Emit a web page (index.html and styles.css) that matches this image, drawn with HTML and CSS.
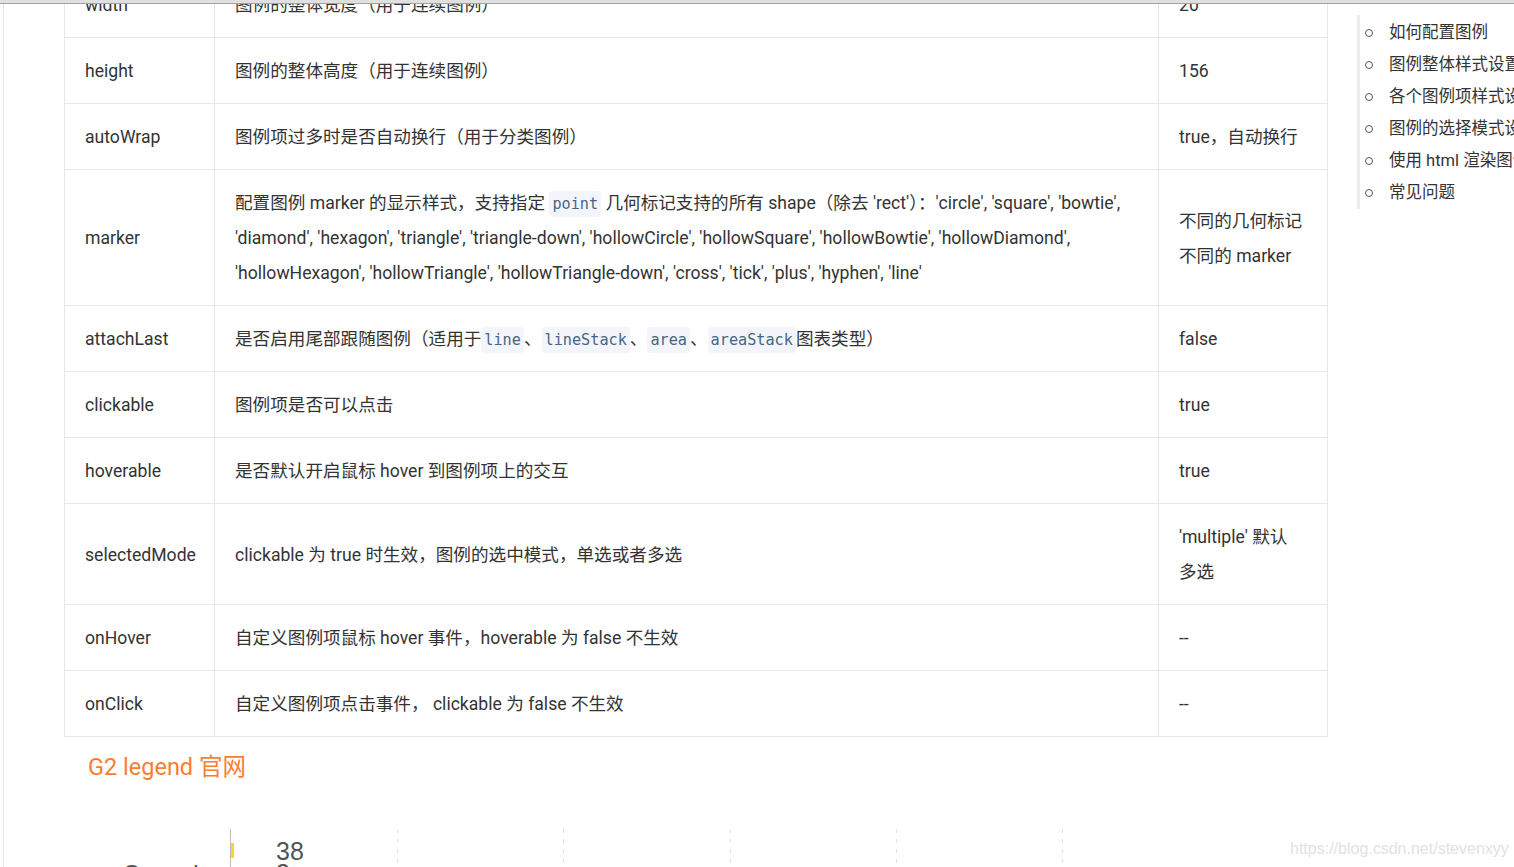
FILE: index.html
```html
<!DOCTYPE html>
<html lang="zh-CN">
<head>
<meta charset="utf-8">
<title>G2 legend</title>
<link rel="stylesheet" href="styles.css">
</head>
<body>
<div class="topbar"></div>
<div class="page">
  <main class="main">
    <table class="props">
      <colgroup><col class="c1"><col class="c2"><col class="c3"></colgroup>
      <tbody>
        <tr><td>width</td><td>图例的整体宽度（用于连续图例）</td><td>20</td></tr>
        <tr><td>height</td><td>图例的整体高度（用于连续图例）</td><td>156</td></tr>
        <tr><td>autoWrap</td><td>图例项过多时是否自动换行（用于分类图例）</td><td>true，自动换行</td></tr>
        <tr><td>marker</td><td>配置图例 marker 的显示样式，支持指定 <code>point</code> 几何标记支持的所有 shape（除去 'rect'）：'circle', 'square', 'bowtie', 'diamond', 'hexagon', 'triangle', 'triangle-down', 'hollowCircle', 'hollowSquare', 'hollowBowtie', 'hollowDiamond', 'hollowHexagon', 'hollowTriangle', 'hollowTriangle-down', 'cross', 'tick', 'plus', 'hyphen', 'line'</td><td>不同的几何标记不同的 marker</td></tr>
        <tr><td>attachLast</td><td>是否启用尾部跟随图例（适用于<code>line</code>、<code>lineStack</code>、<code>area</code>、<code>areaStack</code>图表类型）</td><td>false</td></tr>
        <tr><td>clickable</td><td>图例项是否可以点击</td><td>true</td></tr>
        <tr><td>hoverable</td><td>是否默认开启鼠标 hover 到图例项上的交互</td><td>true</td></tr>
        <tr><td>selectedMode</td><td>clickable 为 true 时生效，图例的选中模式，单选或者多选</td><td>'multiple' 默认<span class="nw">多选</span></td></tr>
        <tr><td>onHover</td><td>自定义图例项鼠标 hover 事件，hoverable 为 false 不生效</td><td>--</td></tr>
        <tr><td>onClick</td><td>自定义图例项点击事件，&nbsp;clickable 为 false 不生效</td><td>--</td></tr>
      </tbody>
    </table>
    <p class="linkline"><a class="extlink" href="#">G2 legend 官网</a></p>
    <svg class="chart" width="1100" height="120" viewBox="0 0 1100 120">
      <g stroke="#e2e2e2" stroke-width="1" stroke-dasharray="4 6">
        <line x1="333.5" y1="8" x2="333.5" y2="120"/>
        <line x1="499.5" y1="8" x2="499.5" y2="120"/>
        <line x1="666.5" y1="8" x2="666.5" y2="120"/>
        <line x1="832.5" y1="8" x2="832.5" y2="120"/>
        <line x1="998.5" y1="8" x2="998.5" y2="120"/>
      </g>
      <line x1="166.5" y1="8" x2="166.5" y2="120" stroke="#bcbcbc" stroke-width="1"/>
      <rect x="167" y="22" width="3" height="15" fill="#fad337"/>
      <text x="212" y="39" class="val">38</text>
      <text x="148" y="61" class="lbl" text-anchor="end">Oceania</text>
      <text x="212" y="61" class="val">3</text>
    </svg>
  </main>
  <aside class="toc">
    <ul class="toc-list">
      <li class="toc-item">如何配置图例</li>
      <li class="toc-item">图例整体样式设置</li>
      <li class="toc-item">各个图例项样式设置</li>
      <li class="toc-item">图例的选择模式设置</li>
      <li class="toc-item">使用 html 渲染图例</li>
      <li class="toc-item">常见问题</li>
    </ul>
  </aside>
</div>
<div class="watermark">https://blog.csdn.net/stevenxyy</div>
</body>
</html>
```

FILE: styles.css
```css
html, body {
  margin: 0;
  padding: 0;
  background: #fff;
  overflow: hidden;
}
body {
  font-family: Roboto, "Noto Sans CJK SC", sans-serif;
  color: #333;
  font-size: 17.6px;
}
.topbar {
  position: fixed;
  top: 0;
  left: 0;
  right: 0;
  height: 3px;
  background: #e0e0e0;
  border-bottom: 1px solid #a3a3a3;
  z-index: 10;
}
.page {
  display: flex;
  align-items: flex-start;
  padding-left: 3px;
}
.main {
  border-left: 1px solid #e6e6e6;
  padding-left: 60px;
  width: 1263px;
  flex: none;
  min-height: 900px;
}
.props {
  margin-top: -29px;
  border-collapse: collapse;
  table-layout: fixed;
  width: 1263px;
}
.c1 { width: 150px; }
.c2 { width: 944px; }
.c3 { width: 169px; }
.props td {
  border: 1px solid #e8e8e8;
  padding: 16px 20px 14px;
  line-height: 35px;
  height: 35px;
  vertical-align: middle;
}
.nw { white-space: nowrap; }
code {
  font-family: "DejaVu Sans Mono", "Liberation Mono", monospace;
  font-size: 15.2px;
  line-height: 1;
  color: #476582;
  background: #f3f5fb;
  border-radius: 4px;
  padding: 4px 3px;
}
.linkline {
  margin: 14px 0 0 0;
  padding-left: 24px;
  line-height: 33px;
}
.extlink {
  color: #fb7d2f;
  text-decoration: none;
  font-size: 23.5px;
}
.chart {
  display: block;
  margin-top: 35px;
}
.chart .val {
  font-family: "Liberation Sans", Arial, sans-serif;
  font-size: 25px;
  fill: #545454;
}
.chart .lbl {
  font-family: "Liberation Sans", Arial, sans-serif;
  font-size: 24px;
  fill: #545454;
}
.toc {
  margin-left: 30px;
  margin-top: 15px;
  border-left: 3px solid #ececec;
  flex: none;
  width: 200px;
}
.toc-list {
  list-style: none;
  margin: 0;
  padding: 2px 0 0 29px;
}
.toc-item {
  position: relative;
  font-size: 16.5px;
  line-height: 32px;
  white-space: nowrap;
  color: #333;
}
.toc-item::before {
  content: "";
  position: absolute;
  left: -24px;
  top: 12px;
  width: 6px;
  height: 6px;
  border: 1.5px solid #555;
  border-radius: 50%;
}
.watermark {
  position: absolute;
  left: 1290px;
  top: 840px;
  font-family: "Liberation Sans", Arial, sans-serif;
  font-size: 16px;
  color: #e2e2e2;
  white-space: nowrap;
}
```
